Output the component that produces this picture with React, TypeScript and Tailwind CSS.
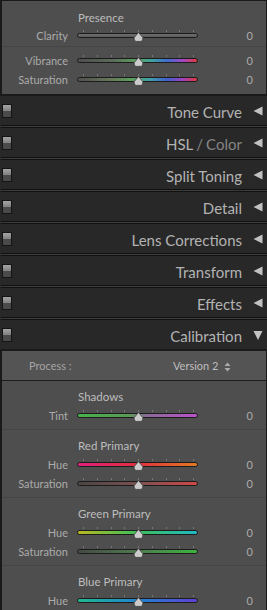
import React from "react";

const font = { fontFamily: "Lato, 'Liberation Sans', sans-serif" };

const ticks = [0, 1, 2, 3, 4, 5, 6, 7, 8];

function Thumb() {
  return (
    <svg width="11" height="10" viewBox="0 0 11 10" className="absolute left-[56px] top-[6px]">
      <path d="M5.5 0.5 L9.8 5.6 Q10.4 9.4 7.8 9.4 L3.2 9.4 Q0.6 9.4 1.2 5.6 Z" fill="#cbcbcb" stroke="#3a3a3a" strokeWidth="0.8" />
    </svg>
  );
}

function Slider({ label, track }: { label: string; track: string }) {
  return (
    <div className="flex h-[19px] items-center">
      <div className="w-[66px] text-right text-[11px] leading-none text-[#ababab]">{label}</div>
      <div className="relative ml-[9px] h-full w-[121px]">
        {ticks.map((i) => (
          <div
            key={i}
            className="absolute top-[4px] h-[2px] w-[1px] bg-[#767676]"
            style={{ left: 6 + i * 13.75 }}
          />
        ))}
        <div className={`absolute left-0 right-0 top-[7px] h-[5px] rounded-full border border-[#1c1c1c] ${track}`} />
        <Thumb />
      </div>
      <div className="flex-1 pr-[13px] text-right text-[11px] leading-none text-[#ababab]">0</div>
    </div>
  );
}

function GroupTitle({ children, h }: { children: React.ReactNode; h: string }) {
  return <div className={`${h} ml-[76px] flex items-center text-[11.5px] text-[#bdbdbd]`}>{children}</div>;
}

function Switch() {
  return (
    <div className="ml-[2px] flex h-[14px] w-[10px] flex-col border border-[#141414]">
      <div className="h-[6px] bg-[linear-gradient(to_bottom,#a4a4a4,#808080)]" />
      <div className="flex-1 bg-[#4a4a4a]" />
    </div>
  );
}

function Header({ children, open }: { children: React.ReactNode; open?: boolean }) {
  return (
    <>
      <div className="flex h-[29px] shrink-0 items-center bg-[#282828] pr-[4px]">
        <Switch />
        <div className="flex-1 pr-[11px] pt-[3px] text-right text-[15px] text-[#b3b3b3]">{children}</div>
        {open ? (
          <svg width="10" height="11" viewBox="0 0 10 11" className="mt-[2px]">
            <path d="M0.5 1 L9.5 1 L5 10 Z" fill="#c2c2c2" />
          </svg>
        ) : (
          <svg width="10" height="10" viewBox="0 0 10 10" className="mt-[1px]">
            <path d="M9.5 0.5 L9.5 9.5 L0.5 5 Z" fill="#c2c2c2" />
          </svg>
        )}
      </div>
      {!open && <div className="ml-[1px] h-[3px] shrink-0 border-y border-[#111] bg-[#3c3c3c]" />}
    </>
  );
}

export default function App() {
  return (
    <div className="flex h-[610px] w-[267px] flex-col overflow-hidden bg-[#282828]" style={font}>
      {/* Presence panel */}
      <div className="shrink-0 border-b-2 border-l-2 border-r border-t border-[#1a1a1a] bg-[#4e4e4e]">
        <div className="pt-[9px]">
          <GroupTitle h="h-4">Presence</GroupTitle>
          <Slider label="Clarity" track="bg-[linear-gradient(to_bottom,#707070,#5a5a5a)]" />
        </div>
        <div className="mt-[1px] border-t border-[#454545] pb-[5px] pt-[4px]">
          <Slider
            label="Vibrance"
            track="bg-[linear-gradient(to_right,#4e4e4e_0%,#5c6c5a_30%,#5aa35e_50%,#3fa3a0_62%,#3f6fd0_75%,#a347c8_88%,#e23a3a_100%)]"
          />
          <Slider
            label="Saturation"
            track="bg-[linear-gradient(to_right,#505050_0%,#687858_28%,#5aa05a_45%,#40a0a8_60%,#4060d0_75%,#a040c0_88%,#e03838_100%)]"
          />
        </div>
      </div>

      <Header>Tone Curve</Header>
      <Header>
        HSL<span className="mx-[3px] text-[#858585]">/</span>
        <span className="text-[#858585]">Color</span>
      </Header>
      <Header>Split Toning</Header>
      <Header>Detail</Header>
      <Header>Lens Corrections</Header>
      <Header>Transform</Header>
      <Header>Effects</Header>
      <Header open>Calibration</Header>

      {/* Calibration panel */}
      <div className="flex-1 border-l-2 border-r border-t-2 border-[#1a1a1a] bg-[#4e4e4e]">
        <div className="flex h-[30px] items-center border-b border-[#1e1e1e] bg-[#545454] pt-[2px] text-[11px] text-[#a4a4a4]">
          <div className="ml-[27px] w-[144px]">Process :</div>
          <div className="text-[#bebebe]">Version 2</div>
          <svg width="7" height="10" viewBox="0 0 7 10" className="ml-[6px]">
            <path d="M3.5 0.5 L6.5 4 L0.5 4 Z M3.5 9.5 L6.5 6 L0.5 6 Z" fill="#acacac" />
          </svg>
        </div>

        <div className="pb-[4px] pt-[7px]">
          <GroupTitle h="h-[18px]">Shadows</GroupTitle>
          <Slider
            label="Tint"
            track="bg-[linear-gradient(to_right,#46b24a_0%,#5a9a55_42%,#8a6a96_58%,#bb52cc_100%)]"
          />
        </div>
        <div className="border-t border-[#454545] pb-[4px] pt-[7px]">
          <GroupTitle h="h-[18px]">Red Primary</GroupTitle>
          <Slider label="Hue" track="bg-[linear-gradient(to_right,#e0207c_0%,#e23040_50%,#e07a22_100%)]" />
          <Slider label="Saturation" track="bg-[linear-gradient(to_right,#4a4444_0%,#7a5050_50%,#d04848_100%)]" />
        </div>
        <div className="border-t border-[#454545] pb-[4px] pt-[7px]">
          <GroupTitle h="h-[18px]">Green Primary</GroupTitle>
          <Slider label="Hue" track="bg-[linear-gradient(to_right,#b8b820_0%,#3cbf5a_50%,#20b8c4_100%)]" />
          <Slider label="Saturation" track="bg-[linear-gradient(to_right,#444a44_0%,#4f7a4f_50%,#3cb43c_100%)]" />
        </div>
        <div className="border-t border-[#454545] pb-[4px] pt-[7px]">
          <GroupTitle h="h-[18px]">Blue Primary</GroupTitle>
          <Slider label="Hue" track="bg-[linear-gradient(to_right,#20b890_0%,#2084d0_50%,#6040d4_100%)]" />
        </div>
      </div>
    </div>
  );
}
